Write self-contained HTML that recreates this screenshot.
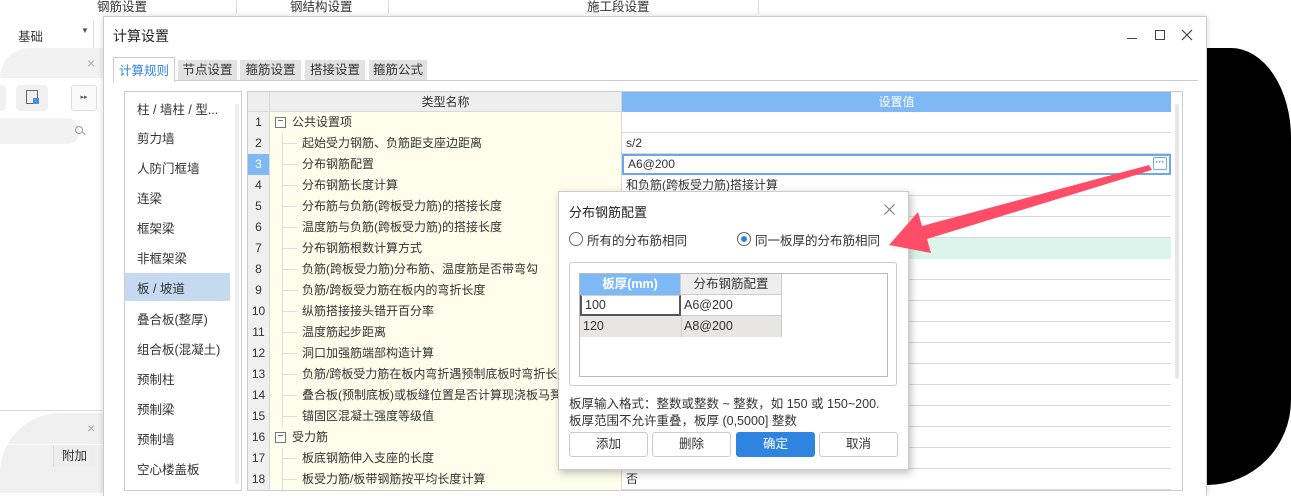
<!DOCTYPE html>
<html><head><meta charset="utf-8"><style>
*{box-sizing:border-box;margin:0;padding:0}
body{width:1291px;height:485px;overflow:hidden;position:relative;background:#fff;font-family:"Liberation Sans","Noto Sans CJK SC",sans-serif;font-size:12px;color:#333}
.a{position:absolute}
.t{position:absolute;white-space:nowrap}
.grid .r{position:absolute;left:248px;width:923px;height:21px;border-bottom:1px solid #d8d8d8}
.num{position:absolute;left:0;width:22px;height:21px;background:#f0f0f0;border-right:1px solid #d8d8d8;text-align:center;line-height:21px;font-size:12px}
.nm{position:absolute;left:22px;width:352px;height:21px;background:#fffdeb;border-right:1px solid #d8d8d8;line-height:21px;padding-left:32px}
.nm:before{content:"";position:absolute;left:12px;top:0;height:21px;border-left:1px solid #ddd}
.nm:after{content:"";position:absolute;left:12px;top:10px;width:15px;border-top:1px solid #ddd}
.nm.g{padding-left:22px}
.nm.g:after,.nm.g:before{display:none}
.box{position:absolute;left:5px;top:5px;width:11px;height:11px;border:1px solid #777;font-size:10px;line-height:8px;text-align:center;background:#fff}
.val{position:absolute;left:374px;width:549px;height:21px;line-height:21px;padding-left:4px}
.li{position:absolute;left:137px;font-size:12.5px}
.btn{position:absolute;top:432px;height:25px;width:79px;border:1px solid #ccc;border-radius:3px;background:#fff;text-align:center;line-height:23px;font-size:12.5px}
</style></head><body>
<div class="a" style="left:0;top:0;width:1291px;height:16px;background:#fff"></div>
<div class="t" style="left:97px;top:-4px;font-size:12.5px">钢筋设置</div>
<div class="a" style="left:236px;top:0;height:14px;border-left:1px solid #ddd"></div>
<div class="t" style="left:290px;top:-4px;font-size:12.5px">钢结构设置</div>
<div class="a" style="left:388px;top:0;height:14px;border-left:1px solid #ddd"></div>
<div class="t" style="left:587px;top:-4px;font-size:12.5px">施工段设置</div>
<div class="a" style="left:758px;top:0;height:14px;border-left:1px solid #ddd"></div>
<div class="a" style="left:0;top:16px;width:103px;height:34px;background:#fff"></div>
<div class="t" style="left:18px;top:26px;font-size:12.5px">基础</div>
<div class="t" style="left:81px;top:26px;font-size:8px;color:#555">▼</div>
<div class="a" style="left:93px;top:20px;height:28px;border-left:1px solid #ddd"></div>
<div class="a" style="left:0;top:48px;width:103px;height:30px;background:#f2f2f2;border-top-left-radius:40px"></div>
<div class="t" style="left:87px;top:55px;font-size:14px;color:#aaa">×</div>
<div class="a" style="left:-4px;top:85px;width:10px;height:26px;background:#f0f0f0;border-radius:4px"></div>
<div class="a" style="left:16px;top:85px;width:32px;height:26px;background:#f0f0f0;border-radius:4px"></div>
<div class="a" style="left:26px;top:90px;width:12px;height:14px;border:1.5px solid #666"></div>
<div class="a" style="left:33px;top:98px;width:6px;height:6px;background:#4a90e2"></div>
<div class="a" style="left:71px;top:85px;width:26px;height:26px;border:1px solid #ddd;border-radius:3px;background:#fafafa;font-size:7px;text-align:center;line-height:24px;color:#555">▸▸</div>
<div class="a" style="left:-10px;top:118px;width:90px;height:26px;background:#f2f2f2;border-radius:13px"></div>
<div class="a" style="left:75px;top:126px;width:8px;height:8px;border:1.2px solid #999;border-radius:50%"></div>
<div class="a" style="left:82px;top:133px;width:4px;border-top:1.2px solid #999;transform:rotate(45deg)"></div>
<div class="a" style="left:0;top:410px;width:103px;border-top:1px solid #ddd"></div>
<div class="a" style="left:0;top:413px;width:103px;height:80px;background:#f0f0f0;border-top-left-radius:60px"></div>
<div class="t" style="left:87px;top:420px;font-size:14px;color:#aaa">×</div>
<div class="a" style="left:0;top:444px;width:103px;border-top:1px solid #fff"></div>
<div class="a" style="left:53px;top:445px;width:42px;height:22px;border-left:1px solid #ddd;background:#eee;font-size:12.5px;line-height:22px;padding-left:8px">附加</div>
<div class="a" style="left:1200px;top:16px;width:91px;height:60px;background:#fff;border-top-right-radius:70px"></div>
<div class="a" style="left:1207px;top:48px;width:84px;height:437px;background:#000;border-top-right-radius:60px 90px;border-bottom-right-radius:84px 85px"></div>
<div class="a" style="left:103px;top:16px;width:1104px;height:480px;background:#fff;border:1px solid #ccc;border-bottom:none;box-shadow:0 0 6px rgba(0,0,0,.15)"></div>
<div class="t" style="left:113px;top:26px;font-size:14px;color:#222">计算设置</div>
<div class="a" style="left:1127px;top:38px;width:10px;border-top:1px solid #444"></div>
<div class="a" style="left:1155px;top:30px;width:10px;height:10px;border:1px solid #444"></div>
<svg class="a" style="left:1181px;top:29px" width="12" height="12"><path d="M1 1L11 11M11 1L1 11" stroke="#444" stroke-width="1.2"/></svg>
<div class="a" style="left:113px;top:80px;width:1085px;border-top:1px solid #ccc"></div>
<div class="a" style="left:113px;top:57px;width:62px;height:25px;background:#fff;border:1px solid #ccc;border-bottom:none;color:#2f84e0;font-size:12.5px;text-align:center;line-height:26px">计算规则</div>
<div class="a" style="left:178px;top:60px;width:59px;height:20px;background:#e2e2e2;font-size:12.5px;text-align:center;line-height:20px">节点设置</div>
<div class="a" style="left:240px;top:60px;width:61px;height:20px;background:#e2e2e2;font-size:12.5px;text-align:center;line-height:20px">箍筋设置</div>
<div class="a" style="left:305px;top:60px;width:60px;height:20px;background:#e2e2e2;font-size:12.5px;text-align:center;line-height:20px">搭接设置</div>
<div class="a" style="left:369px;top:60px;width:58px;height:20px;background:#e2e2e2;font-size:12.5px;text-align:center;line-height:20px">箍筋公式</div>
<div class="a" style="left:124px;top:91px;width:118px;height:400px;border:1px solid #ccc"></div>
<div class="a" style="left:235px;top:104px;width:4px;height:380px;background:#eee;border-radius:2px"></div>
<div class="a" style="left:125px;top:273px;width:105px;height:28px;background:#c5daf0"></div>
<div class="li" style="top:99px">柱 / 墙柱 / 型...</div>
<div class="li" style="top:128px">剪力墙</div>
<div class="li" style="top:158px">人防门框墙</div>
<div class="li" style="top:188px">连梁</div>
<div class="li" style="top:218px">框架梁</div>
<div class="li" style="top:248px">非框架梁</div>
<div class="li" style="top:278px">板 / 坡道</div>
<div class="li" style="top:309px">叠合板(整厚)</div>
<div class="li" style="top:339px">组合板(混凝土)</div>
<div class="li" style="top:369px">预制柱</div>
<div class="li" style="top:399px">预制梁</div>
<div class="li" style="top:429px">预制墙</div>
<div class="li" style="top:459px">空心楼盖板</div>
<div class="a" style="left:247px;top:91px;width:936px;height:400px;border:1px solid #ccc"></div>
<div class="a" style="left:1175px;top:104px;width:4px;height:275px;background:#e6e6e6;border-radius:2px"></div>
<div class="a" style="left:248px;top:92px;width:22px;height:20px;background:#eee;border-right:1px solid #d8d8d8;border-bottom:1px solid #d8d8d8"></div>
<div class="a" style="left:270px;top:92px;width:352px;height:20px;background:#eee;border-right:1px solid #d8d8d8;border-bottom:1px solid #d8d8d8;text-align:center;line-height:20px">类型名称</div>
<div class="a" style="left:622px;top:92px;width:549px;height:20px;background:#7fb9f5;color:#fff;text-align:center;line-height:20px">设置值</div>
<div class="grid">
<div class="r" style="top:112px"><div class="num">1</div><div class="nm g"><span class="box">−</span>公共设置项</div><div class="val"></div></div>
<div class="r" style="top:133px"><div class="num">2</div><div class="nm">起始受力钢筋、负筋距支座边距离</div><div class="val">s/2</div></div>
<div class="r" style="top:154px"><div class="num" style="background:#7fb9f5;color:#fff">3</div><div class="nm">分布钢筋配置</div><div class="val" style="border:2px solid #6aa8ea;line-height:17px">A6@200<span class="a" style="right:2px;top:1px;width:14px;height:13px;border:1px solid #6aa8ea;border-radius:2px;font-size:9px;line-height:8px;text-align:center;color:#2f84e0;font-weight:bold">···</span></div></div>
<div class="r" style="top:175px"><div class="num">4</div><div class="nm">分布钢筋长度计算</div><div class="val">和负筋(跨板受力筋)搭接计算</div></div>
<div class="r" style="top:196px"><div class="num">5</div><div class="nm">分布筋与负筋(跨板受力筋)的搭接长度</div><div class="val"></div></div>
<div class="r" style="top:217px"><div class="num">6</div><div class="nm">温度筋与负筋(跨板受力筋)的搭接长度</div><div class="val"></div></div>
<div class="r" style="top:238px"><div class="num">7</div><div class="nm">分布钢筋根数计算方式</div><div class="val" style="background:#dcf5ec"></div></div>
<div class="r" style="top:259px"><div class="num">8</div><div class="nm">负筋(跨板受力筋)分布筋、温度筋是否带弯勾</div></div>
<div class="r" style="top:280px"><div class="num">9</div><div class="nm">负筋/跨板受力筋在板内的弯折长度</div></div>
<div class="r" style="top:301px"><div class="num">10</div><div class="nm">纵筋搭接接头错开百分率</div></div>
<div class="r" style="top:322px"><div class="num">11</div><div class="nm">温度筋起步距离</div></div>
<div class="r" style="top:343px"><div class="num">12</div><div class="nm">洞口加强筋端部构造计算</div></div>
<div class="r" style="top:364px"><div class="num">13</div><div class="nm">负筋/跨板受力筋在板内弯折遇预制底板时弯折长度</div></div>
<div class="r" style="top:385px"><div class="num">14</div><div class="nm">叠合板(预制底板)或板缝位置是否计算现浇板马凳筋</div></div>
<div class="r" style="top:406px"><div class="num">15</div><div class="nm">锚固区混凝土强度等级值</div></div>
<div class="r" style="top:427px"><div class="num">16</div><div class="nm g"><span class="box">−</span>受力筋</div></div>
<div class="r" style="top:448px"><div class="num">17</div><div class="nm">板底钢筋伸入支座的长度</div></div>
<div class="r" style="top:469px"><div class="num">18</div><div class="nm">板受力筋/板带钢筋按平均长度计算</div><div class="val">否</div></div>
</div>
<div class="a" style="left:558px;top:191px;width:351px;height:279px;background:#fff;border:1px solid #ccc;box-shadow:2px 3px 8px rgba(0,0,0,.25);overflow:hidden">
<div class="t" style="left:10px;top:10px;font-size:13px;color:#222">分布钢筋配置</div>
<svg class="a" style="left:325px;top:12px" width="11" height="11"><path d="M0.5 0.5L10.5 10.5M10.5 0.5L0.5 10.5" stroke="#777" stroke-width="1.1"/></svg>
<div class="a" style="left:10px;top:40px;width:14px;height:14px;border:1px solid #666;border-radius:50%"></div>
<div class="t" style="left:28px;top:38px;font-size:12.5px">所有的分布筋相同</div>
<div class="a" style="left:178px;top:40px;width:14px;height:14px;border:1px solid #666;border-radius:50%"></div>
<div class="a" style="left:182px;top:44px;width:6px;height:6px;background:#2f84e0;border-radius:50%"></div>
<div class="t" style="left:196px;top:38px;font-size:12.5px">同一板厚的分布筋相同</div>
<div class="a" style="left:10px;top:70px;width:328px;height:124px;border:1px solid #ccc;border-radius:3px"></div>
<div class="a" style="left:20px;top:81px;width:309px;height:104px;border:1px solid #bbb"></div>
<div class="a" style="left:21px;top:82px;width:101px;height:21px;background:#7fb9f5;color:#fff;font-weight:bold;text-align:center;line-height:21px;font-size:12.5px;border-right:1px solid #ccc">板厚(mm)</div>
<div class="a" style="left:122px;top:82px;width:101px;height:21px;background:#eee;text-align:center;line-height:21px;font-size:12.5px;border-right:1px solid #ccc;border-bottom:1px solid #ccc">分布钢筋配置</div>
<div class="a" style="left:21px;top:103px;width:101px;height:21px;border:2px solid #555;border-top:1px solid #ccc;line-height:18px;padding-left:3px;font-size:12.5px">100</div>
<div class="a" style="left:122px;top:103px;width:101px;height:21px;border-right:1px solid #ccc;border-bottom:1px solid #ccc;line-height:20px;padding-left:3px;font-size:12.5px">A6@200</div>
<div class="a" style="left:21px;top:124px;width:202px;height:21px;background:#e8e6e3;border-right:1px solid #ccc;line-height:20px;font-size:12.5px"><span class="a" style="left:3px">120</span><span class="a" style="left:104px">A8@200</span><span class="a" style="left:101px;top:0;height:21px;border-left:1px solid #ccc"></span></div>
<div class="t" style="left:10px;top:201px;font-size:12.5px">板厚输入格式：整数或整数 ~ 整数，如 150 或 150~200.</div>
<div class="t" style="left:10px;top:218px;font-size:12.5px">板厚范围不允许重叠，板厚 (0,5000] 整数</div>
</div>
<div class="btn" style="left:569px">添加</div>
<div class="btn" style="left:652px">删除</div>
<div class="btn" style="left:736px;background:#2f84e0;border-color:#2f84e0;color:#fff">确定</div>
<div class="btn" style="left:819px">取消</div>
<svg class="a" style="left:0;top:0" width="1291" height="485"><polygon points="889,245 918,212 922,226 1149,165 1152,170 927,239 931,253" fill="#ff4d67"/></svg>
</body></html>
